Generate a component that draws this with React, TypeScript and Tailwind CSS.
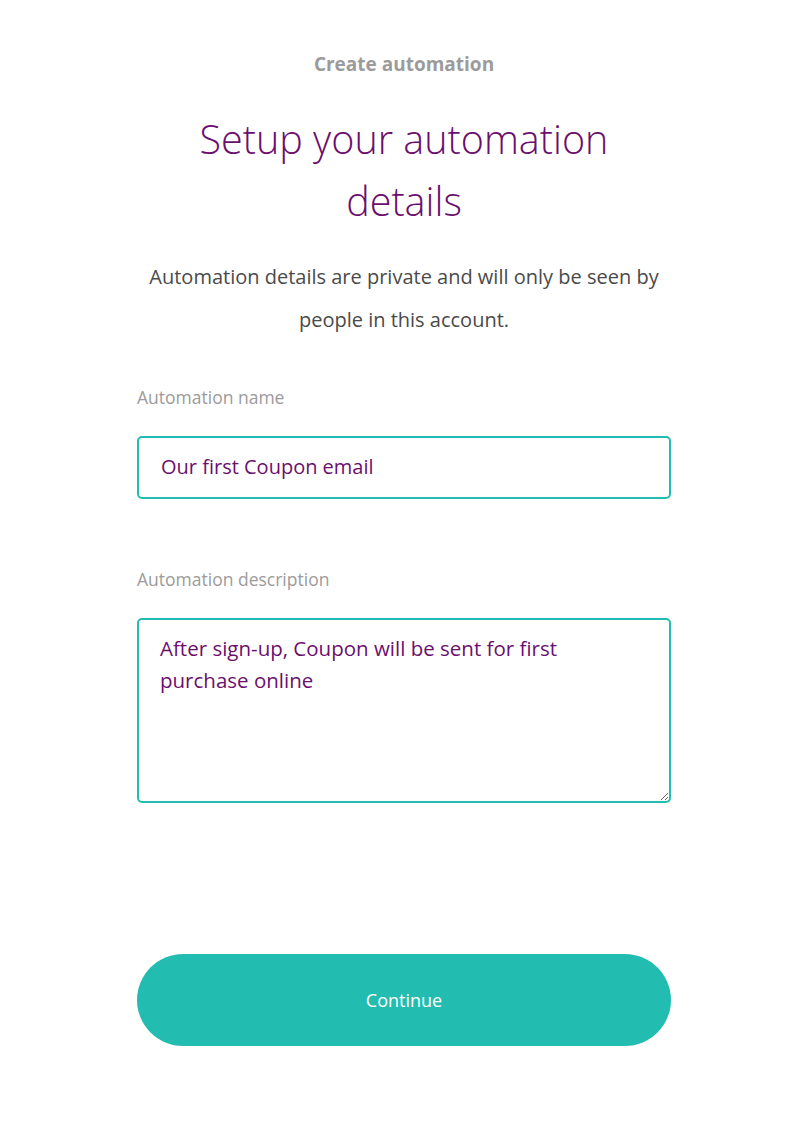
import React, { useState } from 'react';

export default function App() {
  const [name, setName] = useState('Our first Coupon email');
  const [description, setDescription] = useState('After sign-up, Coupon will be sent for first purchase online');

  return (
    <div className="min-h-screen bg-white font-['Open_Sans',sans-serif]">
      <div className="w-[534px] mx-auto pt-[50px] pb-[78px]">
        {/* Header */}
        <p className="text-center text-[19px] leading-[28px] font-bold text-[#9b9b9b]">
          Create automation
        </p>
        <h1 className="mt-[30px] mx-auto max-w-[450px] text-center text-[39.5px] leading-[62px] font-light text-[#6b0f6e]">
          Setup your automation details
        </h1>
        <p className="mt-[23px] text-center text-[20px] leading-[43px] text-[#4a4a4a]">
          Automation details are private and will only be seen by people in this account.
        </p>

        {/* Name */}
        <label className="block mt-[44px] text-[17.5px] leading-[24px] text-[#9b9b9b]">
          Automation name
        </label>
        <input
          type="text"
          value={name}
          onChange={(e) => setName(e.target.value)}
          className="mt-[27px] w-full h-[63px] rounded-[5px] border-2 border-[#22bdb0] px-[22px] pb-[3px] text-[20px] text-[#6b0f6e] outline-none"
        />

        {/* Description */}
        <label className="block mt-[68px] text-[17.5px] leading-[24px] text-[#9b9b9b]">
          Automation description
        </label>
        <textarea
          value={description}
          onChange={(e) => setDescription(e.target.value)}
          className="block mt-[27px] w-full h-[185px] rounded-[5px] border-2 border-[#22bdb0] pl-[21px] pr-[30px] pt-[12px] text-[20.5px] leading-[32px] text-[#6b0f6e] outline-none"
        />

        {/* Action */}
        <button className="mt-[151px] w-full h-[92px] rounded-full bg-[#22bdb0] text-white text-[18px]">
          Continue
        </button>
      </div>
    </div>
  );
}
